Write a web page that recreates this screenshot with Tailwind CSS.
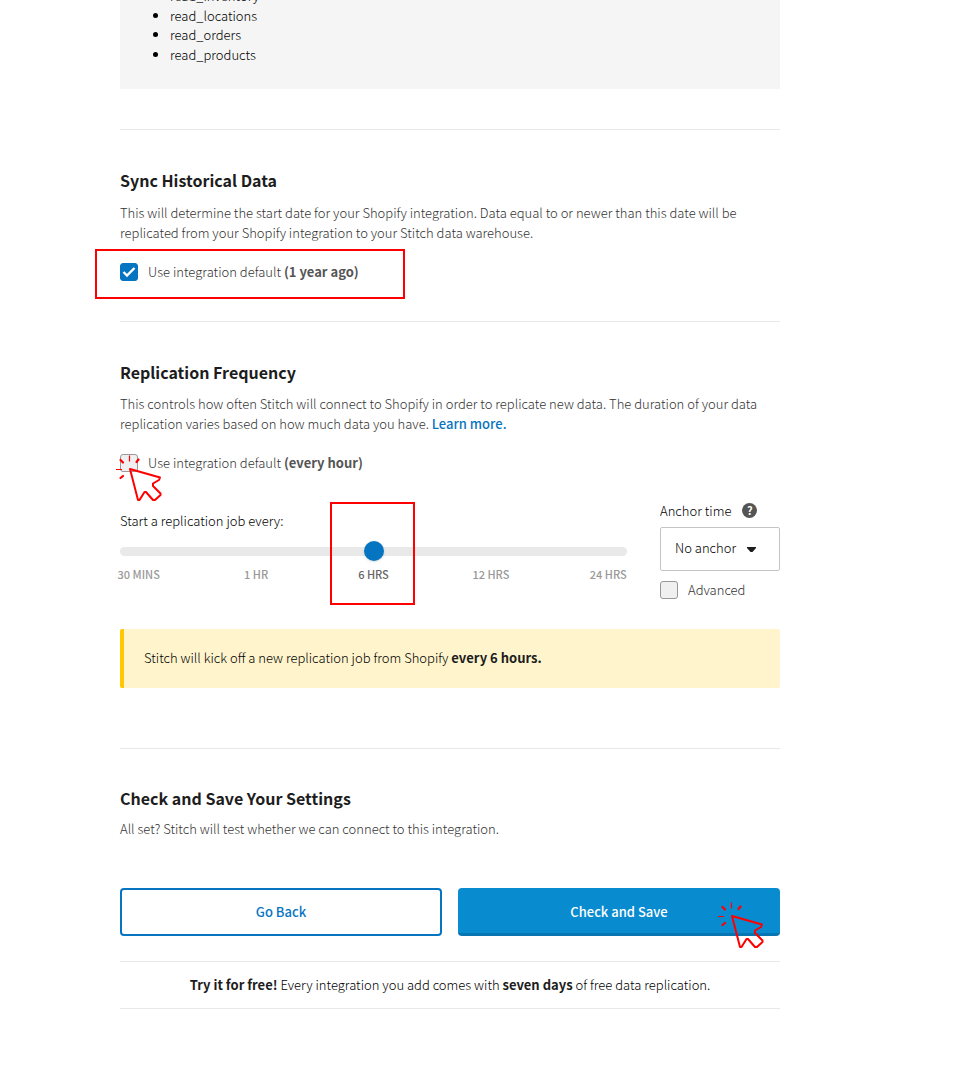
<!DOCTYPE html>
<html lang="en">
<head>
<meta charset="utf-8">
<title>Integration settings</title>
<script src="https://cdn.jsdelivr.net/npm/@tailwindcss/browser@4"></script>
</head>
<body class="bg-white font-['Noto_Sans_CJK_SC','Noto_Sans',sans-serif] text-[13px] leading-[1.5] font-light text-black">
<svg class="hidden" aria-hidden="true">
  <symbol id="click" viewBox="0 0 46 50">
    <g fill="none" stroke="#f00" stroke-linejoin="round" stroke-linecap="round">
      <path stroke-width="2" d="M14 17 44 25.500 43 28 37 31.500V34L44.500 41.500V43L39 48H37L30 40H28.500L23.500 48H22Z"/>
      <path stroke-width="1.200" stroke-linecap="butt" d="M13.500 3.500v6M0 17.500h6"/>
      <path stroke-width="2.200" d="M4.500 8 7 10.500M22.500 7.500 20.500 10M4.500 26 7 24"/>
    </g>
  </symbol>
</svg>
<main class="ml-[120px] mr-10 max-w-[660px]">
  <div class="-mt-[14px] bg-[#f5f5f5] pb-[25px]">
    <ul class="list-disc pl-[50px]">
      <li>read_inventory</li>
      <li>read_locations</li>
      <li>read_orders</li>
      <li>read_products</li>
    </ul>
  </div>

  <section class="relative mt-10 h-48 border-t border-[#e8e8e8] pt-[38px]">
    <h2 class="text-base leading-6 font-bold text-[#1d1d1d]">Sync Historical Data</h2>
    <p class="mt-[11px] text-[#333]">This will determine the start date for your Shopify integration. Data equal to or newer than this date will be replicated from your Shopify integration to your Stitch data warehouse.</p>
    <label class="mt-5 flex w-fit items-center gap-[10px] text-[#333]">
      <span class="relative block size-[18px]">
        <input type="checkbox" checked class="peer block size-[18px] appearance-none rounded-[3px] border border-[#999] bg-[#f0f0f0] checked:border-[#0675c1] checked:bg-[#0675c1]">
        <svg class="pointer-events-none absolute inset-0 hidden size-[18px] peer-checked:block" viewBox="0 0 18 18" fill="none" stroke="#fff" stroke-width="2.400"><path d="M3.500 9 7 12.500 14.500 5"/></svg>
      </span>
      <span>Use integration default <b class="font-bold text-[#555]">(1 year ago)</b></span>
    </label>
    <div class="pointer-events-none absolute top-[119px] -left-[25px] h-[50px] w-[310px] border-2 border-[#f00]"></div>
  </section>

  <section class="border-t border-[#e8e8e8] pt-[38px]">
    <h2 class="text-base leading-6 font-bold text-[#1d1d1d]">Replication Frequency</h2>
    <p class="mt-[10px] text-[#333]">This controls how often Stitch will connect to Shopify in order to replicate new data. The duration of your data replication varies based on how much data you have. <a href="#" class="font-medium text-[#0675c1]">Learn more.</a></p>
    <div class="relative mt-5">
      <label class="flex w-fit items-center gap-[10px] text-[#333]">
        <input type="checkbox" class="block size-[18px] appearance-none rounded-[3px] border border-[#999] bg-[#f0f0f0]">
        <span>Use integration default <b class="font-bold text-[#555]">(every hour)</b></span>
      </label>
      <svg class="pointer-events-none absolute -top-[1px] -left-1 h-[50px] w-[46px]"><use href="#click"/></svg>
    </div>

    <div class="mt-7 flex items-start gap-[33px]">
      <div class="relative min-w-0 flex-1 pt-[10px]">
        <label for="freq" class="block">Start a replication job every:</label>
        <input id="freq" type="range" min="0" max="4" step="1" value="2" class="mt-[11px] block h-5 w-full appearance-none bg-transparent [&::-webkit-slider-runnable-track]:h-[9px] [&::-webkit-slider-runnable-track]:rounded-full [&::-webkit-slider-runnable-track]:bg-[#e9e9e9] [&::-webkit-slider-thumb]:-mt-[6px] [&::-webkit-slider-thumb]:size-5 [&::-webkit-slider-thumb]:appearance-none [&::-webkit-slider-thumb]:rounded-full [&::-webkit-slider-thumb]:bg-[#0675c1] [&::-webkit-slider-thumb]:shadow-sm">
        <div class="-mx-10 mt-[5px] grid grid-cols-5 text-center text-[11px] leading-4 font-medium text-[#999]">
          <span>30 MINS</span><span>1 HR</span><span class="text-[#666]">6 HRS</span><span>12 HRS</span><span>24 HRS</span>
        </div>
        <div class="pointer-events-none absolute top-px left-[210px] h-[103px] w-[85px] border-2 border-[#f00]"></div>
      </div>
      <div class="w-[120px]">
        <div class="flex items-center gap-[11px]">
          <label for="anchor">Anchor time</label>
          <button type="button" aria-label="About anchor time" class="flex size-[15px] items-center justify-center rounded-full bg-[#555] text-[11px] leading-none font-bold text-white">?</button>
        </div>
        <div class="relative mt-[7px]">
          <select id="anchor" class="block h-11 w-full appearance-none rounded-[2px] border border-[#c4c4c4] bg-white pb-0.5 pl-[14px]"><option>No anchor</option></select>
          <svg class="pointer-events-none absolute top-5 left-[87px] h-[5px] w-[9px]" viewBox="0 0 9 5" fill="#1d1d1d"><path d="M0 0h9v1L5.500 5h-2L0 1Z"/></svg>
        </div>
        <label class="mt-[9px] flex items-center gap-[10px] text-[#333]">
          <input type="checkbox" class="block size-[18px] appearance-none rounded-[3px] border border-[#999] bg-[#f0f0f0]">
          <span>Advanced</span>
        </label>
      </div>
    </div>

    <p class="mt-[29px] rounded-[2px] border-l-4 border-[#ffc800] bg-[#fff4cc] pt-[19px] pb-[21px] pl-5">Stitch will kick off a new replication job from Shopify <b class="font-bold text-[#1d1d1d]">every 6 hours.</b></p>
  </section>

  <section class="mt-[60px] border-t border-[#e8e8e8] pt-[37px]">
    <h2 class="text-base leading-6 font-bold text-[#1d1d1d]">Check and Save Your Settings</h2>
    <p class="mt-[9px] text-[#333]">All set? Stitch will test whether we can connect to this integration.</p>
    <div class="relative mt-[49px] grid grid-cols-2 gap-4 font-medium">
      <button type="button" class="h-12 rounded-[4px] border-2 border-[#0675c1] text-[#0675c1]">Go Back</button>
      <button type="button" class="h-12 rounded-[4px] border-b-[3px] border-[#0675b1] bg-[#098bd0] pt-[3px] text-white">Check and Save</button>
      <svg class="pointer-events-none absolute top-[11px] right-4 h-[50px] w-[46px]"><use href="#click"/></svg>
    </div>
    <p class="mt-[25px] border-y border-[#e8e8e8] pt-[13px] pb-[14px] text-center"><b class="font-bold text-[#1d1d1d]">Try it for free!</b> Every integration you add comes with <b class="font-bold text-[#1d1d1d]">seven days</b> of free data replication.</p>
  </section>
</main>
</body>
</html>
